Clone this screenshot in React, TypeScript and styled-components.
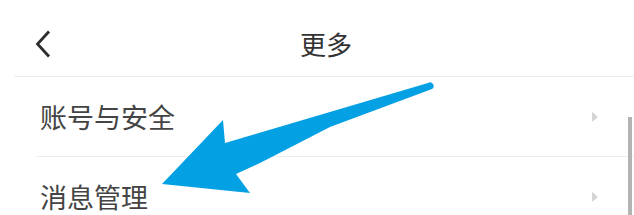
import React from "react";
import styled, { createGlobalStyle } from "styled-components";

const Global = createGlobalStyle`
  html, body { margin: 0; padding: 0; background: #ffffff; }
  body { font-family: "Noto Sans CJK SC", "Noto Sans", sans-serif; }
`;

const Page = styled.div`
  position: relative;
  width: 634px;
  height: 215px;
  overflow: hidden;
  background: #fff;
`;

const Header = styled.header`
  display: grid;
  grid-template-columns: 1fr auto 1fr;
  align-items: center;
  height: 77px;
  box-sizing: border-box;
  padding-top: 11px;
  margin-left: 14px;
  border-bottom: 1px solid #ececec;
`;

const BackButton = styled.button`
  justify-self: start;
  display: flex;
  align-items: center;
  justify-content: center;
  margin-left: 20px;
  padding: 0;
  width: 20px;
  height: 30px;
  border: 0;
  background: transparent;
`;

const Title = styled.h1`
  margin: 0;
  padding-left: 4px;
  font-size: 26px;
  font-weight: 400;
  line-height: 30px;
  color: #333;
`;

const List = styled.ul`
  list-style: none;
  margin: 0 0 0 36px;
  padding: 0;
`;

const Row = styled.li`
  display: flex;
  align-items: center;
  justify-content: space-between;
  height: 79px;
  padding: 0 36px 0 4px;
  border-bottom: 1px solid #ededed;
`;

const Label = styled.span`
  font-size: 27px;
  line-height: 32px;
  color: #444;
`;

const RowArrow = styled.span`
  width: 0;
  height: 0;
  border-top: 5px solid transparent;
  border-bottom: 5px solid transparent;
  border-left: 6px solid #d4d4d4;
`;

const Scrollbar = styled.div`
  position: absolute;
  right: 2px;
  top: 117px;
  bottom: 0;
  width: 4px;
  background: #b3b3b3;
`;

const Annotation = styled.svg`
  position: absolute;
  left: 0;
  top: 0;
  pointer-events: none;
`;

export default function App() {
  return (
    <>
      <Global />
      <Page>
        <Header>
          <BackButton aria-label="返回">
            <svg width="18" height="30" viewBox="0 0 18 30">
              <path d="M14 2.5 L2.5 15 L14 27.5" fill="none" stroke="#2d2d2d" strokeWidth="2.8" strokeLinejoin="miter" />
            </svg>
          </BackButton>
          <Title>更多</Title>
          <span />
        </Header>
        <List>
          <Row>
            <Label>账号与安全</Label>
            <RowArrow />
          </Row>
          <Row>
            <Label>消息管理</Label>
            <RowArrow />
          </Row>
        </List>
        <Scrollbar />
        <Annotation width="634" height="215" viewBox="0 0 634 215">
          <path
            d="M428 83 L225 143 L223 120 L162 184 L250 193 L236 174 L260 163 L330 127 L432 89 A3.5 3.5 0 0 0 428 83 Z"
            fill="#03a1e4"
          />
        </Annotation>
      </Page>
    </>
  );
}
